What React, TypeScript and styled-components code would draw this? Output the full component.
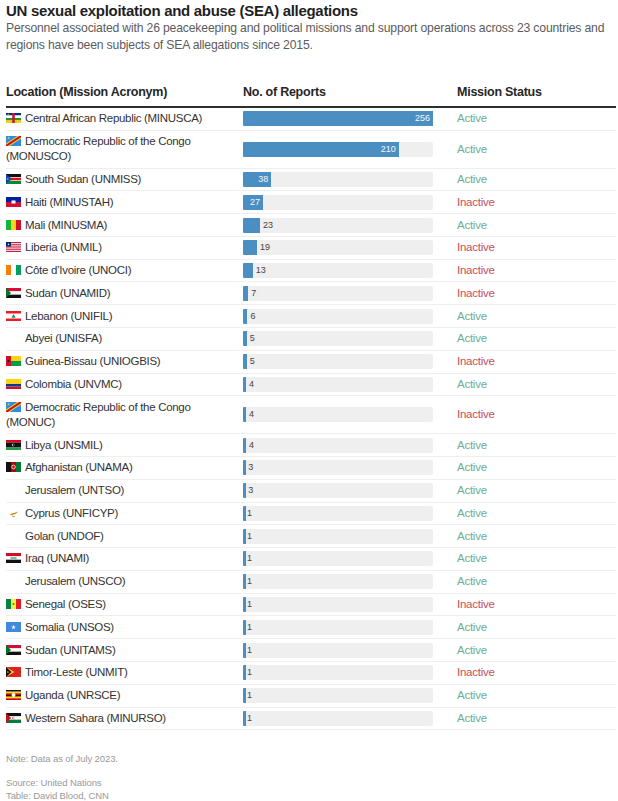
import React from "react";
import styled, { createGlobalStyle } from "styled-components";

const Global = createGlobalStyle`
  html, body { margin: 0; padding: 0; background: #ffffff; }
  body { font-family: "Liberation Sans", Arial, sans-serif; color: #262626; }
`;

type Status = "Active" | "Inactive";
interface Item { flag: string; name: string; n: number; status: Status; }

const DATA: Item[] = [
  { flag: "caf", name: "Central African Republic (MINUSCA)", n: 256, status: "Active" },
  { flag: "cod", name: "Democratic Republic of the Congo (MONUSCO)", n: 210, status: "Active" },
  { flag: "ssd", name: "South Sudan (UNMISS)", n: 38, status: "Active" },
  { flag: "hti", name: "Haiti (MINUSTAH)", n: 27, status: "Inactive" },
  { flag: "mli", name: "Mali (MINUSMA)", n: 23, status: "Active" },
  { flag: "lbr", name: "Liberia (UNMIL)", n: 19, status: "Inactive" },
  { flag: "civ", name: "Côte d’Ivoire (UNOCI)", n: 13, status: "Inactive" },
  { flag: "sdn", name: "Sudan (UNAMID)", n: 7, status: "Inactive" },
  { flag: "lbn", name: "Lebanon (UNIFIL)", n: 6, status: "Active" },
  { flag: "", name: "Abyei (UNISFA)", n: 5, status: "Active" },
  { flag: "gnb", name: "Guinea-Bissau (UNIOGBIS)", n: 5, status: "Inactive" },
  { flag: "col", name: "Colombia (UNVMC)", n: 4, status: "Active" },
  { flag: "cod", name: "Democratic Republic of the Congo (MONUC)", n: 4, status: "Inactive" },
  { flag: "lby", name: "Libya (UNSMIL)", n: 4, status: "Active" },
  { flag: "afg", name: "Afghanistan (UNAMA)", n: 3, status: "Active" },
  { flag: "", name: "Jerusalem (UNTSO)", n: 3, status: "Active" },
  { flag: "cyp", name: "Cyprus (UNFICYP)", n: 1, status: "Active" },
  { flag: "", name: "Golan (UNDOF)", n: 1, status: "Active" },
  { flag: "irq", name: "Iraq (UNAMI)", n: 1, status: "Active" },
  { flag: "", name: "Jerusalem (UNSCO)", n: 1, status: "Active" },
  { flag: "sen", name: "Senegal (OSES)", n: 1, status: "Inactive" },
  { flag: "som", name: "Somalia (UNSOS)", n: 1, status: "Active" },
  { flag: "sdn", name: "Sudan (UNITAMS)", n: 1, status: "Active" },
  { flag: "tls", name: "Timor-Leste (UNMIT)", n: 1, status: "Inactive" },
  { flag: "uga", name: "Uganda (UNRSCE)", n: 1, status: "Active" },
  { flag: "esh", name: "Western Sahara (MINURSO)", n: 1, status: "Active" },
];

const MAX = 256;
const TRACK = 190;

const Page = styled.div`
  padding: 2px 2px 0 6px;
  width: 610px;
`;

const Title = styled.h1`
  margin: 0;
  font-size: 15px;
  line-height: 18px;
  font-weight: 700;
  color: #1f1f1f;
  letter-spacing: -0.3px;
`;

const Subtitle = styled.p`
  margin: 0;
  font-size: 12.2px;
  line-height: 17px;
  color: #5c5c5c;
  letter-spacing: -0.17px;
`;

const Table = styled.div`
  margin-top: 27px;
`;

const Grid = styled.div`
  display: grid;
  grid-template-columns: 237px 214px 1fr;
  align-items: center;
`;

const HeaderRow = styled(Grid)`
  padding: 4px 0 6px;
  border-bottom: 2px solid #2e2e2e;
`;

const HeadCell = styled.div`
  font-size: 12.5px;
  line-height: 15px;
  font-weight: 700;
  color: #262626;
  letter-spacing: -0.25px;
`;

const Row = styled(Grid)`
  padding: 3.4px 0;
  border-bottom: 1px solid #efefef;
`;

const Location = styled.div`
  font-size: 11.5px;
  line-height: 15px;
  color: #333333;
  letter-spacing: -0.3px;
  padding-right: 30px;
`;

const FlagSlot = styled.span`
  display: inline-block;
  width: 15px;
  height: 10px;
  margin-right: 4px;
  vertical-align: -1px;
  svg { display: block; }
`;

const Track = styled.div`
  position: relative;
  width: ${TRACK}px;
  height: 15px;
  background: #efefef;
  border-radius: 2px;
`;

const Fill = styled.div`
  height: 100%;
  background: #4b8ec2;
  border-radius: 1px 0 0 1px;
  display: flex;
  align-items: center;
  justify-content: flex-end;
  box-sizing: border-box;
  padding-right: 3px;
  overflow: hidden;
`;

const ValueText = styled.span<{ $inside?: boolean }>`
  font-family: "Liberation Sans", Arial, sans-serif;
  font-variant-numeric: tabular-nums;
  font-size: 9px;
  line-height: 15px;
  color: ${(p) => (p.$inside ? "#f4f8fc" : "#444444")};
`;

const Outside = styled(ValueText)`
  position: absolute;
  top: 0;
`;

const StatusCell = styled.div<{ $status: Status }>`
  font-size: 11.5px;
  line-height: 15px;
  letter-spacing: -0.25px;
  color: ${(p) => (p.$status === "Active" ? "#6dae94" : "#c4505d")};
`;

const Footer = styled.div`
  margin-top: 22px;
  font-size: 9.5px;
  line-height: 13px;
  color: #9a9a9a;
  letter-spacing: -0.1px;
`;

const FooterGap = styled.div`
  height: 11px;
`;

const star = (cx: number, cy: number, r: number) => {
  const pts: string[] = [];
  for (let i = 0; i < 10; i++) {
    const rad = i % 2 === 0 ? r : r * 0.4;
    const a = -Math.PI / 2 + (i * Math.PI) / 5;
    pts.push(`${(cx + rad * Math.cos(a)).toFixed(2)},${(cy + rad * Math.sin(a)).toFixed(2)}`);
  }
  return pts.join(" ");
};

const Flag: React.FC<{ code: string }> = ({ code }) => {
  let c: React.ReactNode = null;
  switch (code) {
    case "caf":
      c = (
        <>
          <rect width="15" height="2.5" fill="#003082" />
          <rect y="2.5" width="15" height="2.5" fill="#ffffff" />
          <rect y="5" width="15" height="2.5" fill="#289728" />
          <rect y="7.5" width="15" height="2.5" fill="#ffce00" />
          <rect x="6.25" width="2.5" height="10" fill="#d21034" />
          <polygon points={star(2.2, 1.25, 1)} fill="#ffce00" />
        </>
      );
      break;
    case "cod":
      c = (
        <>
          <rect width="15" height="10" fill="#2a8ee6" />
          <polygon points="0,10 0,7.6 11.4,0 15,0 15,2.4 3.6,10" fill="#f7d618" />
          <polygon points="0,10 0,8.8 13.2,0 15,0 15,1.2 1.8,10" fill="#ce1021" />
          <polygon points={star(2.6, 2.2, 1.6)} fill="#f7d618" />
        </>
      );
      break;
    case "ssd":
      c = (
        <>
          <rect width="15" height="10" fill="#ffffff" />
          <rect width="15" height="3" fill="#111111" />
          <rect y="3.7" width="15" height="2.6" fill="#da121a" />
          <rect y="7" width="15" height="3" fill="#078930" />
          <polygon points="0,0 6,5 0,10" fill="#0f47af" />
          <polygon points={star(1.8, 5, 1.1)} fill="#fcdd09" />
        </>
      );
      break;
    case "hti":
      c = (
        <>
          <rect width="15" height="5" fill="#00209f" />
          <rect y="5" width="15" height="5" fill="#d21034" />
          <rect x="5.5" y="3.5" width="4" height="3" fill="#ffffff" />
        </>
      );
      break;
    case "mli":
      c = (
        <>
          <rect width="5" height="10" fill="#14b53a" />
          <rect x="5" width="5" height="10" fill="#fcd116" />
          <rect x="10" width="5" height="10" fill="#ce1126" />
        </>
      );
      break;
    case "lbr":
      c = (
        <>
          <rect width="15" height="10" fill="#ffffff" />
          {[0, 1, 2, 3, 4, 5].map((i) => (
            <rect key={i} y={i * 1.82} width="15" height="0.91" fill="#bf0a30" />
          ))}
          <rect width="5" height="4.55" fill="#002868" />
          <polygon points={star(2.5, 2.3, 1.3)} fill="#ffffff" />
        </>
      );
      break;
    case "civ":
      c = (
        <>
          <rect width="5" height="10" fill="#f77f00" />
          <rect x="5" width="5" height="10" fill="#ffffff" />
          <rect x="10" width="5" height="10" fill="#009e60" />
        </>
      );
      break;
    case "sdn":
      c = (
        <>
          <rect width="15" height="3.34" fill="#d21034" />
          <rect y="3.33" width="15" height="3.34" fill="#ffffff" />
          <rect y="6.66" width="15" height="3.34" fill="#111111" />
          <polygon points="0,0 5,5 0,10" fill="#007229" />
        </>
      );
      break;
    case "lbn":
      c = (
        <>
          <rect width="15" height="10" fill="#ffffff" />
          <rect width="15" height="2.5" fill="#ed1c24" />
          <rect y="7.5" width="15" height="2.5" fill="#ed1c24" />
          <polygon points="7.5,3 9.6,6.8 5.4,6.8" fill="#00a651" />
        </>
      );
      break;
    case "gnb":
      c = (
        <>
          <rect width="15" height="5" fill="#fcd116" />
          <rect y="5" width="15" height="5" fill="#009e49" />
          <rect width="5" height="10" fill="#ce1126" />
          <polygon points={star(2.5, 5, 1.6)} fill="#111111" />
        </>
      );
      break;
    case "col":
      c = (
        <>
          <rect width="15" height="5" fill="#fcd116" />
          <rect y="5" width="15" height="2.5" fill="#003893" />
          <rect y="7.5" width="15" height="2.5" fill="#ce1126" />
        </>
      );
      break;
    case "lby":
      c = (
        <>
          <rect width="15" height="2.5" fill="#e70013" />
          <rect y="2.5" width="15" height="5" fill="#111111" />
          <rect y="7.5" width="15" height="2.5" fill="#239e46" />
          <circle cx="7.2" cy="5" r="1.3" fill="#ffffff" />
          <circle cx="7.7" cy="5" r="1.05" fill="#111111" />
        </>
      );
      break;
    case "afg":
      c = (
        <>
          <rect width="5" height="10" fill="#111111" />
          <rect x="5" width="5" height="10" fill="#be0000" />
          <rect x="10" width="5" height="10" fill="#007a36" />
          <circle cx="7.5" cy="5" r="1.8" fill="none" stroke="#ffffff" strokeWidth="0.8" />
        </>
      );
      break;
    case "cyp":
      c = (
        <>
          <path d="M4,6.5 C5.5,5.2 8,4.8 10.5,4.2 L12,3.3 L11,4.8 C9.5,6.2 7,6.9 5,7.2 Z" fill="#d57800" />
          <path d="M6,8.2 C7,8.6 8,8.6 9,8.2" stroke="#4e5b31" strokeWidth="0.6" fill="none" />
        </>
      );
      break;
    case "irq":
      c = (
        <>
          <rect width="15" height="3.34" fill="#ce1126" />
          <rect y="3.33" width="15" height="3.34" fill="#ffffff" />
          <rect y="6.66" width="15" height="3.34" fill="#111111" />
          <rect x="4.5" y="4.5" width="6" height="1" fill="#007a3d" />
        </>
      );
      break;
    case "sen":
      c = (
        <>
          <rect width="5" height="10" fill="#00853f" />
          <rect x="5" width="5" height="10" fill="#fdef42" />
          <rect x="10" width="5" height="10" fill="#e31b23" />
          <polygon points={star(7.5, 5.1, 1.5)} fill="#00853f" />
        </>
      );
      break;
    case "som":
      c = (
        <>
          <rect width="15" height="10" fill="#4189dd" />
          <polygon points={star(7.5, 5.2, 2.4)} fill="#ffffff" />
        </>
      );
      break;
    case "tls":
      c = (
        <>
          <rect width="15" height="10" fill="#dc241f" />
          <polygon points="0,0 8.5,5 0,10" fill="#ffc726" />
          <polygon points="0,0 5.5,5 0,10" fill="#111111" />
          <polygon points={star(1.9, 5, 1.1)} fill="#ffffff" />
        </>
      );
      break;
    case "uga":
      c = (
        <>
          {["#111111", "#fcdc04", "#d90000", "#111111", "#fcdc04", "#d90000"].map((col, i) => (
            <rect key={i} y={(i * 10) / 6} width="15" height={10 / 6 + 0.02} fill={col} />
          ))}
          <circle cx="7.5" cy="5" r="2" fill="#ffffff" />
        </>
      );
      break;
    case "esh":
      c = (
        <>
          <rect width="15" height="3.34" fill="#111111" />
          <rect y="3.33" width="15" height="3.34" fill="#ffffff" />
          <rect y="6.66" width="15" height="3.34" fill="#007a3d" />
          <polygon points="0,0 5,5 0,10" fill="#c4111b" />
          <circle cx="7.6" cy="5" r="1.2" fill="#c4111b" />
          <circle cx="8" cy="5" r="1" fill="#ffffff" />
        </>
      );
      break;
    default:
      c = null;
  }
  return (
    <FlagSlot>
      {c && (
        <svg width="15" height="10" viewBox="0 0 15 10">
          {c}
        </svg>
      )}
    </FlagSlot>
  );
};

const Bar: React.FC<{ n: number }> = ({ n }) => {
  const w = Math.max(1, (n / MAX) * TRACK);
  const inside = w > 19;
  return (
    <Track>
      <Fill style={{ width: `${w}px` }}>{inside && <ValueText $inside>{n}</ValueText>}</Fill>
      {!inside && <Outside style={{ left: `${w + 3}px` }}>{n}</Outside>}
    </Track>
  );
};

export default function App() {
  return (
    <Page>
      <Global />
      <Title>UN sexual exploitation and abuse (SEA) allegations</Title>
      <Subtitle>
        Personnel associated with 26 peacekeeping and political missions and support operations across 23 countries and
        regions have been subjects of SEA allegations since 2015.
      </Subtitle>
      <Table>
        <HeaderRow>
          <HeadCell>Location (Mission Acronym)</HeadCell>
          <HeadCell>No. of Reports</HeadCell>
          <HeadCell>Mission Status</HeadCell>
        </HeaderRow>
        {DATA.map((d, i) => (
          <Row key={i}>
            <Location>
              <Flag code={d.flag} />
              {d.name}
            </Location>
            <Bar n={d.n} />
            <StatusCell $status={d.status}>{d.status}</StatusCell>
          </Row>
        ))}
      </Table>
      <Footer>
        <div>Note: Data as of July 2023.</div>
        <FooterGap />
        <div>Source: United Nations</div>
        <div>Table: David Blood, CNN</div>
      </Footer>
    </Page>
  );
}
